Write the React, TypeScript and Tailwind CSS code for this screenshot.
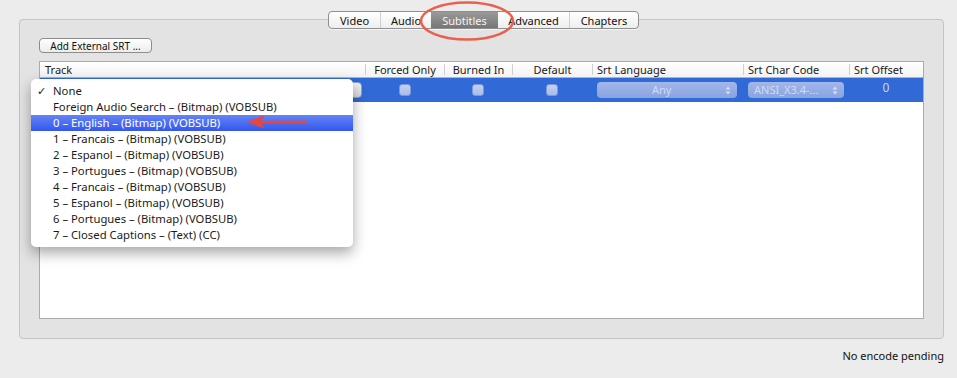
import React from "react";

const font = { fontFamily: '"Noto Sans", "DejaVu Sans", sans-serif' };

const tabs = [
  { label: "Video", w: "w-[51px]" },
  { label: "Audio", w: "w-[51px]" },
  { label: "Subtitles", w: "w-[67px]", active: true },
  { label: "Advanced", w: "w-[71px]" },
  { label: "Chapters", w: "w-[69px]" },
];

const tracks = [
  "Foreign Audio Search – (Bitmap) (VOBSUB)",
  "0 – English – (Bitmap) (VOBSUB)",
  "1 – Francais – (Bitmap) (VOBSUB)",
  "2 – Espanol – (Bitmap) (VOBSUB)",
  "3 – Portugues – (Bitmap) (VOBSUB)",
  "4 – Francais – (Bitmap) (VOBSUB)",
  "5 – Espanol – (Bitmap) (VOBSUB)",
  "6 – Portugues – (Bitmap) (VOBSUB)",
  "7 – Closed Captions – (Text) (CC)",
];

function Arrows({ color }: { color: string }) {
  return (
    <svg width="6" height="9" viewBox="0 0 6 9" className="shrink-0">
      <path d="M3 0.5 L5.5 3.5 H0.5 Z" fill={color} />
      <path d="M3 8.5 L5.5 5.5 H0.5 Z" fill={color} />
    </svg>
  );
}

function Check() {
  return (
    <div className="h-[12px] w-[12px] rounded-[3px] border border-[#7f99d8] bg-gradient-to-b from-[#c3d2f0] to-[#a7bcea]" />
  );
}

export default function App() {
  return (
    <div
      className="relative h-[378px] w-[957px] overflow-hidden bg-[#ececec] pl-[19px] pr-[13px] pt-[19px] text-[#1a1a1a]"
      style={font}
    >
      {/* tab view */}
      <div className="relative h-[320px] rounded-[4px] border border-[#c4c4c4] bg-[#e3e3e3] px-[19px] pt-[18px]">
        {/* segmented tabs straddling the top edge */}
        <div className="absolute left-[308px] top-[-9px] flex h-[18px] overflow-hidden rounded-[4px] border border-[#8e8e8e] bg-gradient-to-b from-white to-[#eeeeee] shadow-[0_1px_0_rgba(255,255,255,0.6)]">
          {tabs.map((t, i) => (
            <div
              key={t.label}
              className={
                t.active
                  ? `${t.w} flex items-center justify-center bg-gradient-to-b from-[#9a9a9a] to-[#767676] text-[11px] leading-none text-[#f4f4f4]`
                  : `${t.w} flex items-center justify-center text-[11px] leading-none text-[#111] ${
                      i > 0 && !tabs[i - 1].active ? "border-l border-[#d0d0d0]" : ""
                    }`
              }
            >
              {t.label}
            </div>
          ))}
        </div>

        <button className="flex h-[15px] w-[113px] items-center justify-center rounded-[4px] border border-[#8c8c8c] bg-gradient-to-b from-white to-[#ececec] text-[10px] leading-none text-[#111]">
          Add External SRT ...
        </button>

        {/* subtitle table */}
        <div className="mt-[8px] h-[258px] border border-[#ababab] bg-white">
          <div className="flex h-[16px] border-b border-[#b4b4b4] bg-gradient-to-b from-white to-[#f3f3f3] text-[11px] leading-[15px]">
            <div className="w-[325px] pl-[5px]">Track</div>
            <div className="my-[2px] w-[79px] border-l border-[#cfcfcf] text-center leading-[11px]">Forced Only</div>
            <div className="my-[2px] w-[68px] border-l border-[#cfcfcf] text-center leading-[11px]">Burned In</div>
            <div className="my-[2px] w-[80px] border-l border-[#cfcfcf] text-center leading-[11px]">Default</div>
            <div className="my-[2px] w-[151px] border-l border-[#cfcfcf] pl-[4px] leading-[11px]">Srt Language</div>
            <div className="my-[2px] w-[106px] border-l border-[#cfcfcf] pl-[4px] leading-[11px]">Srt Char Code</div>
            <div className="my-[2px] w-[74px] border-l border-[#cfcfcf] pl-[4px] leading-[11px]">Srt Offset</div>
          </div>
          <div className="flex h-[24px] items-center bg-[#3169d6]">
            <div className="flex w-[325px] justify-end pr-[3px]">
              <div className="h-[16px] w-[300px] rounded-[4px] border border-[#8fa3cf] bg-gradient-to-b from-[#f4f4f4] to-[#dadada]" />
            </div>
            <div className="flex w-[79px] justify-center">
              <Check />
            </div>
            <div className="flex w-[68px] justify-center">
              <Check />
            </div>
            <div className="flex w-[80px] justify-center">
              <Check />
            </div>
            <div className="w-[151px] pl-[5px]">
              <div className="flex h-[16px] w-[140px] items-center rounded-[4px] bg-gradient-to-b from-[#a2b7ea] to-[#89a3e2] pl-[55px] pr-[6px] text-[11px] text-[#d2dcf3]">
                <span className="flex-1">Any</span>
                <Arrows color="#d8e0f4" />
              </div>
            </div>
            <div className="w-[106px] pl-[5px]">
              <div className="flex h-[16px] w-[96px] items-center rounded-[4px] bg-gradient-to-b from-[#a2b7ea] to-[#89a3e2] pl-[6px] pr-[6px] text-[11px] text-[#d2dcf3]">
                <span className="flex-1 whitespace-nowrap">ANSI_X3.4-...</span>
                <Arrows color="#d8e0f4" />
              </div>
            </div>
            <div className="mb-[5px] w-[74px] text-center text-[12px] text-[#c9d6f2]">0</div>
          </div>
        </div>
      </div>

      <div className="mt-[10px] text-right text-[11px] leading-[14px] text-[#111]">No encode pending</div>

      {/* open track menu */}
      <div className="absolute left-[31px] top-[79px] w-[322px] rounded-[5px] bg-white py-[4px] text-[11.3px] shadow-[0_6px_14px_rgba(0,0,0,0.35)]">
        <div className="flex h-[16px] items-center">
          <span className="w-[22px] pl-[6px] text-[11px]">✓</span>
          <span>None</span>
        </div>
        {tracks.map((t, i) => (
          <div
            key={t}
            className={
              i === 1
                ? "flex h-[16px] items-center bg-gradient-to-b from-[#6483f6] to-[#3456ee] pl-[22px] text-white"
                : "flex h-[16px] items-center pl-[22px]"
            }
          >
            {t}
          </div>
        ))}
      </div>

      {/* annotation arrow */}
      <svg className="absolute left-[244px] top-[112px]" width="68" height="20" viewBox="0 0 68 20">
        <line x1="62" y1="10" x2="16" y2="10" stroke="#e8473c" strokeWidth="2.5" strokeLinecap="round" />
        <path d="M3 10 L20 3.5 L17 10 L20 16.5 Z" fill="#e8473c" />
      </svg>

      {/* annotation circle */}
      <svg className="absolute left-[417px] top-0" width="102" height="44" viewBox="0 0 102 44">
        <ellipse cx="50" cy="21" rx="46" ry="18.5" fill="none" stroke="#e8604e" strokeWidth="2.5" />
      </svg>
    </div>
  );
}
